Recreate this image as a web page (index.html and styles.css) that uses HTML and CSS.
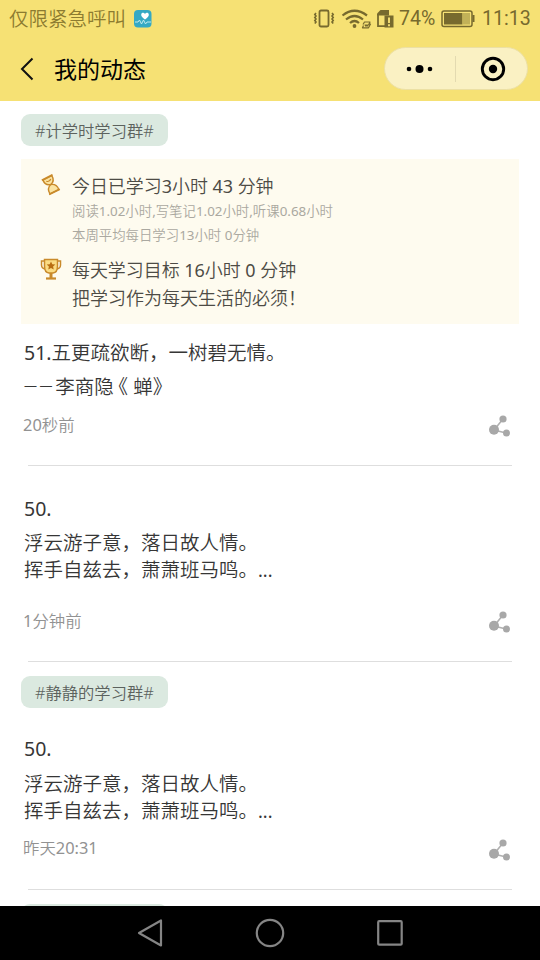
FILE: index.html
```
<!DOCTYPE html>
<html lang="zh-CN">
<head>
<meta charset="utf-8">
<title>我的动态</title>
<link rel="stylesheet" href="styles.css">
</head>
<body>
<svg class="defs" width="0" height="0">
  <symbol id="share" viewBox="0 0 24 24">
    <path d="M7 15 L16 4 M7 15 L19 18" stroke="#b0b0b0" stroke-width="1.6"/>
    <circle cx="7" cy="14.7" r="5" fill="#a8a8a8"/><circle cx="16" cy="4" r="3.6" fill="#a8a8a8"/><circle cx="19.5" cy="18" r="3.5" fill="#a8a8a8"/>
  </symbol>
</svg>
<header class="top">
  <div class="status">
    <span class="carrier">仅限紧急呼叫</span>
    <svg class="health" width="18" height="18" viewBox="0 0 18 18"><rect width="17.5" height="17.5" rx="4" fill="#35a9c4"/><path d="M11 9.5C8.500 7.500 7.200 6.300 7.200 4.700c0-2.200 2.800-2.500 3.800-.8 1-1.700 3.800-1.400 3.800.8 0 1.600-1.300 2.800-3.800 4.800z" fill="#fff"/><path d="M1 12h3l1.500-2 2 4 2-4 2 4 1.500-2h4" fill="none" stroke="#bfe9ef" stroke-width="1"/></svg>
    <svg class="signals" width="82" height="22" viewBox="0 0 82 22" fill="none" stroke="#776a2e">
      <rect x="6.500" y="2.500" width="9" height="16" rx="1.500" stroke-width="1.800"/>
      <path d="M3 5l-1.200 1.500 1.200 1.500-1.200 1.500 1.200 1.500-1.200 1.500 1.200 1.500-1.200 1.500M19 5l1.200 1.500-1.200 1.500 1.200 1.500-1.200 1.500 1.200 1.500-1.200 1.500 1.200 1.500" stroke-width="1.600"/>
      <path d="M29.500 7.500q12-9.500 24.500 0M33 11.500q8.500-7 17 0M37 15q4.500-4 9 0" stroke-width="2.200"/>
      <circle cx="41.500" cy="18" r="1.900" fill="#776a2e" stroke="none"/>
      <path d="M50 16.500l1.500-2.500h5.500l-1.500 3h-4M56 16h1.500l-2 3.800h-6l1-2.300M52 18h3" stroke-width="1.200" stroke-linejoin="round"/>
      <path d="M65 6v12.200h7" stroke-width="1.800"/>
      <path d="M64.100 5.500l3.400-3.500h8.500v5.500H64.100z" fill="#776a2e" stroke="none"/>
      <rect x="71.500" y="7.500" width="9" height="12" fill="#776a2e" stroke="none"/>
      <path d="M76 9.500v5.500M76 16.300v1.900" stroke="#f6e174" stroke-width="1.900"/>
    </svg>
    <span class="percent">74%</span>
    <svg class="battery" width="34" height="18" viewBox="0 0 34 18"><rect x="1" y="1" width="30" height="15.500" rx="2" fill="none" stroke="#776a2e" stroke-width="1.500"/><path d="M31.500 5h2v7h-2z" fill="#776a2e"/><path d="M3 3h18.500v11.500H3z" fill="#776a2e"/><path d="M21.500 3H29v11.500h-7.500z" fill="#c2b158"/></svg>
    <span class="clock">11:13</span>
  </div>
  <div class="nav">
    <svg class="back" width="14" height="24" viewBox="0 0 14 24"><path d="M12.500 1.500 2 12l10.500 10.500" fill="none" stroke="#111" stroke-width="2"/></svg>
    <h1 class="title">我的动态</h1>
    <div class="capsule">
      <svg class="half" viewBox="0 0 71 42"><circle cx="24" cy="21" r="2.300"/><circle cx="34.500" cy="21" r="4"/><circle cx="45" cy="21" r="2.300"/></svg>
      <span class="split"></span>
      <svg class="half" viewBox="0 0 71 42"><circle cx="37" cy="21" r="10.700" fill="none" stroke="#000" stroke-width="2.900"/><circle cx="37" cy="21" r="4.200"/></svg>
    </div>
  </div>
</header>
<main class="feed">
  <div class="tag">#计学时学习群#</div>
  <section class="card">
    <div class="line main-line"><svg class="icon" width="22" height="22" viewBox="0 0 22 22"><g transform="rotate(-27 11 11)" fill="#fbe4a2" stroke="#c98a2b" stroke-width="1.400"><path d="M6 3c-.3 4 .7 6.500 5 7.500 4.300-1 5.300-3.500 5-7.500z"/><path d="M6 18.500c-.3-4.500 1.500-7 5-8 3.500 1 5.300 3.500 5 8z"/><path d="M5 2.500h12M5 18.700h12" stroke-width="1.700"/><path d="M8.500 5.500q2.500 2.500 5 0" fill="none" stroke-width="1.200"/></g></svg><span>今日已学习<span class="num">3</span>小时<span class="num"> 43 </span>分钟</span></div>
    <div class="line small detail">阅读<span class="num">1.02</span>小时<span class="num">,</span>写笔记<span class="num">1.02</span>小时<span class="num">,</span>听课<span class="num">0.68</span>小时</div>
    <div class="line small">本周平均每日学习<span class="num">13</span>小时<span class="num"> 0</span>分钟</div>
    <div class="line main-line goal"><svg class="icon" width="22" height="22" viewBox="0 0 22 22"><g fill="none" stroke="#c98a2b" stroke-width="1.500"><path d="M5 3H1.500v4q0 4 5 4M17 3h3.500v4q0 4-5 4"/><path d="M11 14v6" stroke-width="3"/><path d="M4.500 1.500h13V8q0 6.500-4.500 7H9Q4.500 14.500 4.500 8z" fill="#fbdc83"/><path d="M6 20.500h10" stroke-width="2.200"/></g><path d="M11 3.500l1.300 2.700 3 .4-2.200 2 .6 3-2.700-1.500-2.700 1.500.6-3-2.200-2 3-.4z" fill="#b96e12"/></svg><span>每天学习目标<span class="num"> 16</span>小时<span class="num"> 0 </span>分钟</span></div>
    <div class="line motto">把学习作为每天生活的必须！</div>
  </section>
  <article class="post first">
    <p class="text"><span class="num">51.</span>五更疏欲断，一树碧无情。</p>
    <p class="text"><span class="dash">——</span>李商隐<span class="quote">《</span>蝉<span class="quote close">》</span></p>
    <div class="meta"><span><span class="num">20</span>秒前</span><svg class="share" width="24" height="24"><use href="#share"/></svg></div>
  </article>
  <article class="post second">
    <p class="text num">50.</p>
    <p class="text poem">浮云游子意，落日故人情。<br>挥手自兹去，萧萧班马鸣。<span class="dots">...</span></p>
    <div class="meta"><span><span class="num">1</span>分钟前</span><svg class="share" width="24" height="24"><use href="#share"/></svg></div>
  </article>
  <div class="tag again">#静静的学习群#</div>
  <article class="post third">
    <p class="text num">50.</p>
    <p class="text poem">浮云游子意，落日故人情。<br>挥手自兹去，萧萧班马鸣。<span class="dots">...</span></p>
    <div class="meta"><span>昨天<span class="num">20:31</span></span><svg class="share" width="24" height="24"><use href="#share"/></svg></div>
  </article>
  <div class="tag next"></div>
</main>
<footer class="keys">
  <svg width="26" height="28" viewBox="0 0 26 28"><path d="M24 1.500v25L2 14z"/></svg>
  <svg width="30" height="30" viewBox="0 0 30 30"><circle cx="15" cy="15" r="13.200"/></svg>
  <svg width="26" height="26" viewBox="0 0 26 26"><rect x="1.200" y="1.200" width="23.500" height="23.500" rx="1"/></svg>
</footer>
</body>
</html>
```
FILE: styles.css
```
* { box-sizing: border-box; }
body {
  margin: 0;
  width: 540px;
  height: 960px;
  overflow: hidden;
  display: flex;
  flex-direction: column;
  background: #fff;
  font-family: "Noto Sans", "Noto Sans CJK SC", sans-serif;
  font-weight: 350;
}
.defs { position: absolute; }
svg { flex: none; display: block; }
h1, p { margin: 0; font-weight: inherit; }

.top { height: 101px; flex: none; background: #f6e174; }
.status { display: flex; align-items: center; height: 37px; padding-left: 9px; color: #776a2e; white-space: nowrap; }
.carrier { font-size: 19.5px; line-height: 35px; margin-top: -1px; color: #8c7b30; }
.health { margin-left: 8px; }
.signals { margin-left: 161px; }
.percent { margin-left: 4px; width: 42px; font: 400 19.5px/37px Roboto, sans-serif; }
.battery { margin: 1px 0 0; }
.clock { margin-left: 7px; font: 400 19.6px/37px Roboto, sans-serif; }
.nav { display: flex; align-items: center; height: 64px; padding: 0 12px 0 20px; }
.title { margin-left: 20px; font-size: 23px; line-height: 40px; font-weight: 400; color: #000; }
.capsule { display: flex; align-items: center; width: 144px; height: 43px; margin-left: auto; margin-top: -1px; border: 1px solid #ece0a4; border-radius: 22px; background: #faf1c3; }
.half { width: 71px; height: 42px; }
.split { width: 1px; height: 26px; margin: 0 0 0 -1px; background: #e3dab0; }

.feed { flex: 1; min-height: 0; overflow: hidden; padding: 13px 21px 0; }
.tag { width: 147px; height: 32px; padding-left: 14px; border-radius: 9px; background: #dbe9e0; color: #5c625e; font-size: 16.3px; line-height: 35px; white-space: nowrap; }
.num { font-weight: 400; white-space: pre; }
.card { height: 165px; margin-top: 13px; padding: 12px 0 0 51px; background: #fefbef; color: #4d4b45; }
.line { white-space: nowrap; }
.main-line { display: flex; align-items: center; height: 28px; margin-left: -32px; font-size: 17.95px; }
.icon { margin-right: 10px; }
.small { height: 24px; line-height: 24px; font-size: 13.4px; color: #aaa8a0; }
.goal { margin-top: 8px; }
.motto { font-size: 18px; line-height: 31px; }

.post { display: flex; flex-direction: column; padding-left: 3px; }
.post::after { content: ""; flex: none; width: 484px; height: 1px; margin-left: 4px; background: #dedede; }
.text { flex: none; color: #363636; font-size: 19.5px; line-height: 34px; white-space: nowrap; }
.first .text { height: 34px; }
.poem { line-height: 27px; padding-top: 4px; }
.dots { font-size: 18px; line-height: 1; font-weight: 400; }
.dash { font-size: 13px; line-height: 1; letter-spacing: 2.6px; vertical-align: 4px; font-weight: 400; }
.quote { margin-left: 4.5px; margin-right: 5.2px; font-feature-settings: "halt"; }
.close { margin-left: 0; }
.meta { display: flex; flex: none; justify-content: space-between; height: 24px; line-height: 24px; padding-right: 8px; color: #929292; font-size: 16.4px; }
.first { height: 142px; padding-top: 12px; }
.first .meta { margin: 9px 0 28px -1px; }
.second { height: 196px; padding-top: 26px; }
.second .poem { padding-top: 3px; }
.second .meta { margin: 26px 0 28px -1px; }
.share { margin-top: 2px; }
.again { margin-top: 14px; }
.third { height: 182px; padding-top: 24px; }
.third .meta { margin: 12px 0 29px -1px; }
.third .share { margin-top: 3px; }
.next { margin-top: 14px; }

.keys { display: flex; align-items: center; justify-content: center; gap: 92px; height: 54px; flex: none; background: #000; }
.keys svg { fill: none; stroke: #858585; stroke-width: 2.2; stroke-linejoin: round; }
```
